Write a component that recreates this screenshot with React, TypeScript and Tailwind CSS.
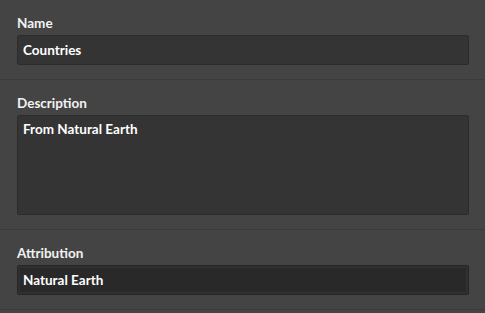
export default function App() {
  return (
    <div className="h-[313px] w-[485px] overflow-hidden bg-[#444444] font-['Lato',sans-serif] text-[13.5px] text-white">
      <div className="border-b border-[#3a3a3a] px-[17px] pt-[15px] pb-[14px]">
        <label className="mb-[4px] block leading-[16px] font-bold text-[#f2f2f2]">Name</label>
        <div className="flex h-[30px] w-[452px] items-center rounded-[2px] border border-[#2b2b2b] bg-[#343434] px-[5px] font-bold">
          Countries
        </div>
      </div>
      <div className="border-b border-[#3a3a3a] px-[17px] pt-[15px] pb-[14px]">
        <label className="mb-[4px] block leading-[16px] font-bold text-[#f2f2f2]">Description</label>
        <div className="h-[100px] w-[452px] rounded-[2px] border border-[#2b2b2b] bg-[#343434] px-[5px] pt-[5px] leading-[16px] font-bold">
          From Natural Earth
        </div>
      </div>
      <div className="border-b border-[#3a3a3a] px-[17px] pt-[15px] pb-[14px]">
        <label className="mb-[4px] block leading-[16px] font-bold text-[#f2f2f2]">Attribution</label>
        <div className="flex h-[30px] w-[452px] items-center rounded-[2px] border border-[#262626] bg-[#292929] px-[5px] font-bold shadow-[inset_0_0_0_2px_#303030]">
          Natural Earth
        </div>
      </div>
    </div>
  );
}
